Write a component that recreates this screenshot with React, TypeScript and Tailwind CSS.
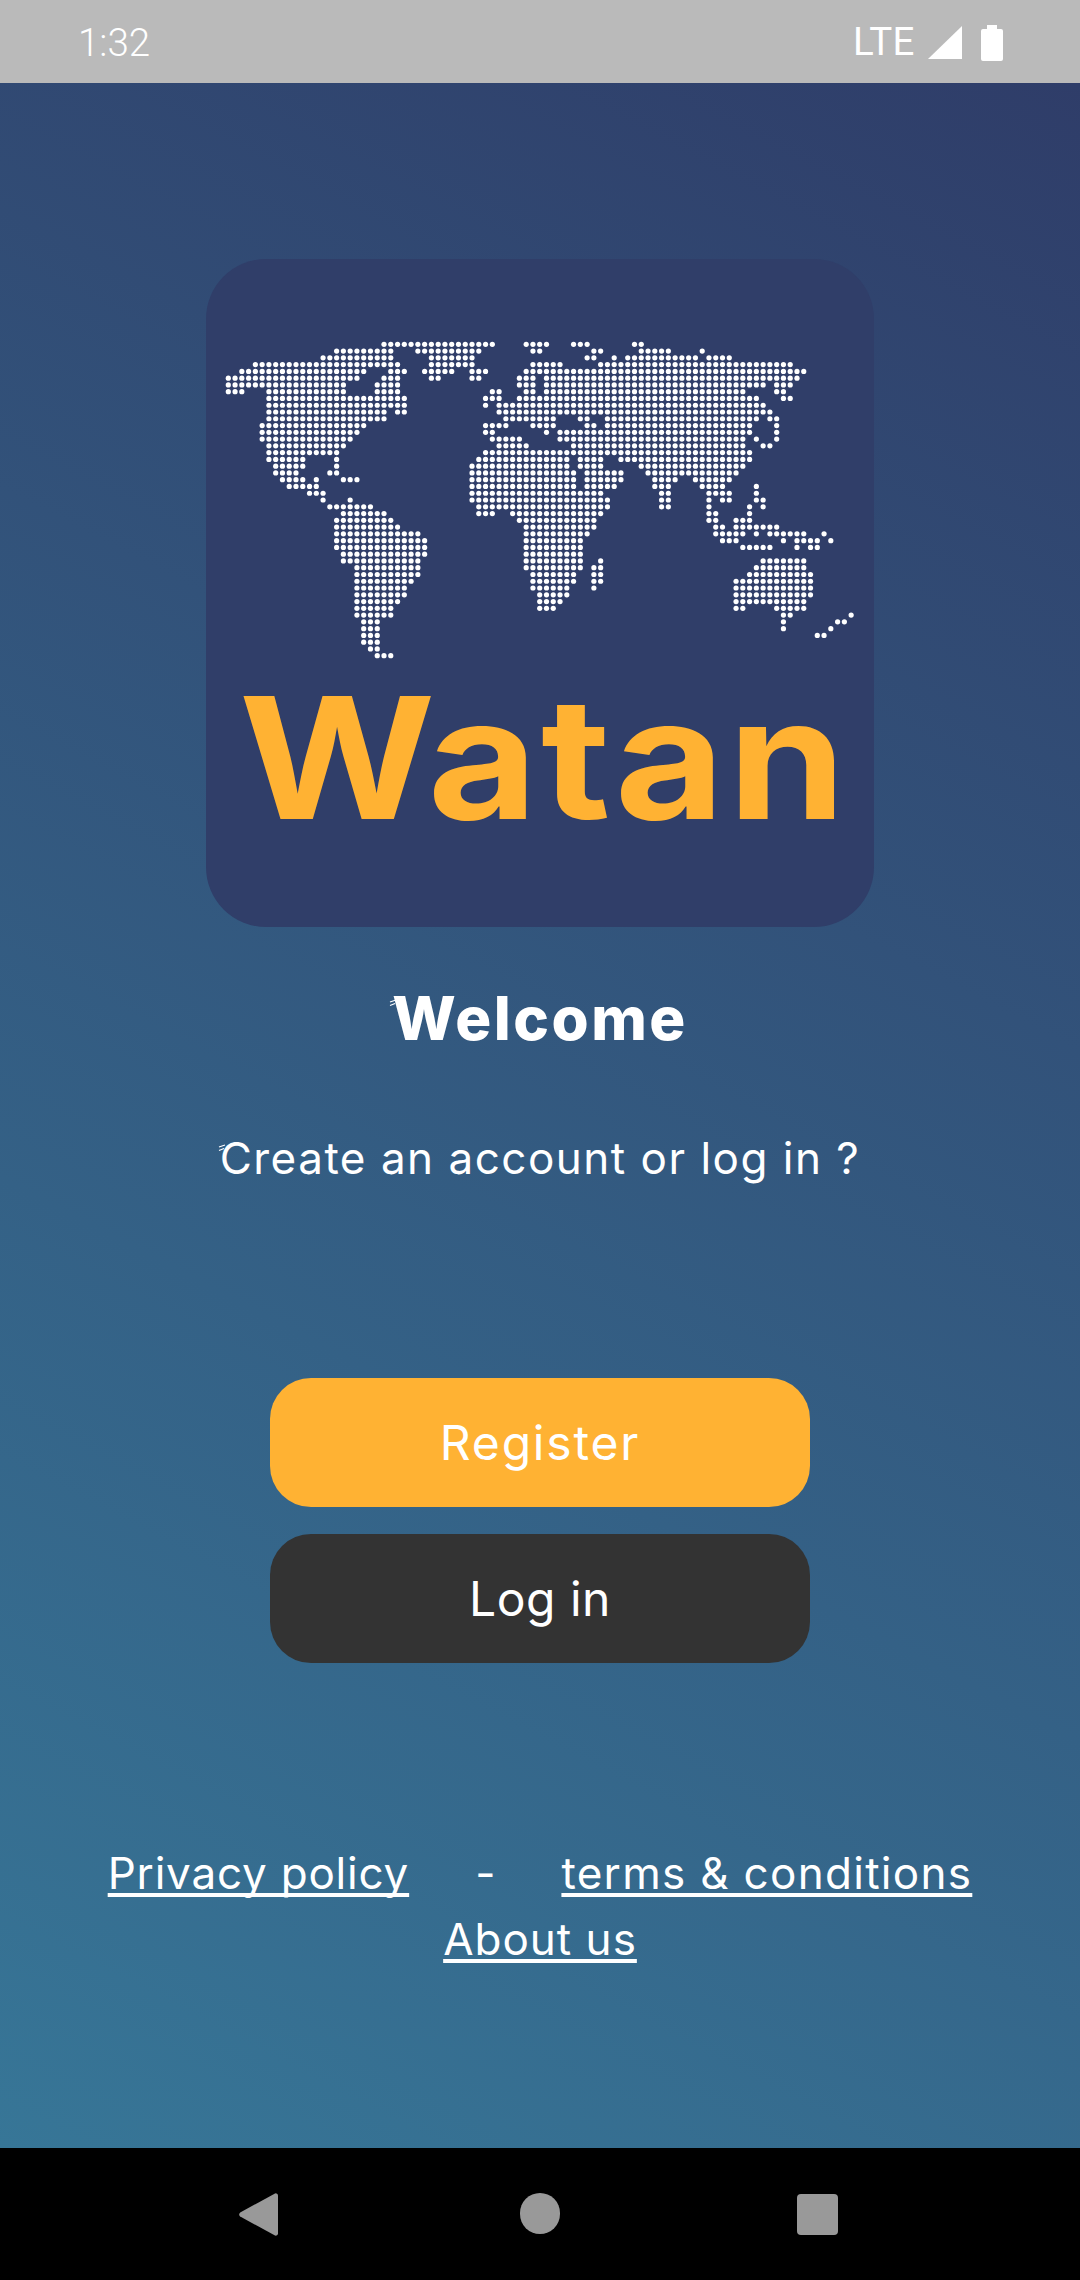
import React from "react"

// one row per line of the dotted map: [first column, last column] runs
const mapRows: number[][][] = [
  [[23, 39], [44, 47], [51, 53], [60, 61]],
  [[16, 24], [28, 37], [45, 46], [54, 55], [61, 65], [70, 70]],
  [[14, 24], [30, 36], [53, 54], [57, 57], [59, 69], [71, 74]],
  [[4, 25], [30, 36], [45, 49], [55, 83]],
  [[2, 20], [24, 26], [29, 33], [36, 38], [44, 85]],
  [[0, 19], [23, 25], [30, 31], [36, 37], [43, 45], [47, 84]],
  [[0, 17], [22, 25], [43, 45], [47, 79], [81, 83]],
  [[0, 2], [6, 17], [22, 25], [39, 40], [44, 45], [47, 76], [81, 82]],
  [[6, 26], [38, 40], [43, 78], [82, 83]],
  [[6, 26], [38, 38], [40, 79]],
  [[6, 23], [25, 26], [40, 80]],
  [[6, 23], [41, 48], [52, 53], [56, 78], [80, 81]],
  [[5, 20], [38, 41], [45, 48], [53, 54], [56, 77], [81, 81]],
  [[5, 19], [38, 39], [47, 47], [49, 77], [81, 81]],
  [[5, 18], [39, 43], [49, 76], [78, 78], [81, 81]],
  [[6, 17], [40, 44], [51, 76], [79, 80]],
  [[6, 16], [38, 77]],
  [[6, 11], [16, 16], [37, 50], [52, 55], [58, 77]],
  [[7, 11], [16, 16], [36, 50], [52, 55], [61, 76]],
  [[7, 10], [15, 16], [36, 51], [53, 58], [62, 75]],
  [[8, 11], [13, 13], [17, 19], [36, 51], [53, 58], [63, 66], [69, 74]],
  [[9, 13], [36, 51], [53, 57], [63, 65], [70, 73], [78, 78]],
  [[12, 14], [36, 55], [64, 65], [71, 74], [78, 78]],
  [[14, 14], [18, 18], [36, 56], [64, 65], [71, 71], [73, 74], [78, 79]],
  [[15, 21], [37, 56], [64, 65], [71, 71], [77, 77], [79, 79]],
  [[17, 23], [37, 39], [42, 55], [71, 72], [77, 77]],
  [[16, 24], [43, 54], [71, 72], [75, 77]],
  [[16, 25], [44, 54], [72, 73], [75, 81]],
  [[16, 28], [44, 53], [72, 76], [78, 78], [80, 85], [88, 88]],
  [[16, 29], [44, 52], [73, 75], [82, 82], [84, 87], [89, 89]],
  [[16, 29], [44, 52], [76, 80], [84, 84], [86, 87]],
  [[17, 29], [44, 52]],
  [[17, 28], [44, 52], [55, 55], [79, 85]],
  [[19, 28], [44, 52], [54, 55], [78, 85]],
  [[19, 28], [45, 51], [54, 55], [77, 86]],
  [[19, 27], [45, 51], [54, 55], [75, 86]],
  [[19, 26], [45, 50], [54, 54], [75, 86]],
  [[19, 26], [46, 50], [75, 86]],
  [[19, 25], [46, 49], [75, 85]],
  [[19, 24], [46, 48], [75, 76], [81, 85]],
  [[19, 24], [82, 83], [92, 92]],
  [[20, 22], [82, 82], [90, 91]],
  [[20, 22], [82, 82], [89, 89]],
  [[20, 22], [87, 88]],
  [[20, 22]],
  [[21, 22]],
  [[22, 24]],
]

const DotMap = () => (
  <svg viewBox="0 0 635 320" className="ml-[19px] mt-[82px] w-[635px] h-[320px] shrink-0">
    {mapRows.map((runs, r) =>
      runs.map(([from, to]) =>
        Array.from({ length: to - from + 1 }, (_, i) => (
          <circle key={`${r}-${from + i}`} cx={3.3 + (from + i) * 6.77} cy={3.3 + r * 6.77} r={2.6} fill="#ffffff" />
        ))
      )
    )}
  </svg>
)

// the small stray ticks in front of the first letter of two headings
const Ticks = ({ className }: { className: string }) => (
  <svg viewBox="0 0 8 8" className={`absolute ${className}`}>
    <path d="M1 3 L7 1 M1 6.5 L6 4.5" stroke="#ffffff" strokeWidth="1.3" fill="none" />
  </svg>
)

const StatusBar = () => (
  <div className="h-[83px] shrink-0 bg-[#bababa] flex items-center justify-between pl-[78px] pr-[77px] pt-[2px] text-white font-[Roboto,sans-serif]">
    <span className="mt-[2px] text-[38.5px] leading-none font-light">1:32</span>
    <div className="flex items-center">
      <span className="text-[38.5px] leading-none tracking-[0.5px] font-normal">LTE</span>
      <svg viewBox="0 0 34 33" className="ml-[13px] w-[34px] h-[33px]">
        <path d="M34 0 V33 H0 Z" fill="#ffffff" />
      </svg>
      <svg viewBox="0 0 22 36" className="ml-[19px] w-[22px] h-[36px]">
        <path d="M6 0 H16 V4 H20 a2 2 0 0 1 2 2 V34 a2 2 0 0 1 -2 2 H2 a2 2 0 0 1 -2 -2 V6 a2 2 0 0 1 2 -2 H6 Z" fill="#ffffff" />
      </svg>
    </div>
  </div>
)

const NavBar = () => (
  <div className="h-[132px] shrink-0 bg-black flex items-start pt-[44px] pl-[239px]">
    <svg viewBox="0 0 39 45" className="w-[39px] h-[45px]">
      <path d="M36 1.5 a2.2 2.2 0 0 1 3 2 V41.500 a2.200 2.200 0 0 1 -3 2 L1.200 24.500 a2.500 2.500 0 0 1 0 -4 Z" fill="#999999" />
    </svg>
    <div className="ml-[242px] mt-[1px] w-[40px] h-[41px] rounded-full bg-[#999999]" />
    <div className="ml-[237px] mt-[2px] w-[41px] h-[41px] rounded-[4px] bg-[#999999]" />
  </div>
)

export default function App() {
  return (
    <div className="w-[1080px] h-[2280px] flex flex-col overflow-hidden font-[Inter,sans-serif] text-white">
      <StatusBar />
      <main className="flex-1 flex flex-col items-center pt-[176px] bg-[linear-gradient(207.6deg,#2f3d69,#377697)]">
        <div className="w-[668px] h-[668px] rounded-[60px] bg-[#303e69] flex flex-col overflow-hidden">
          <DotMap />
          <p className="mt-[-3px] ml-[33px] origin-left scale-x-[1.12] text-[169px] leading-[200px] font-bold tracking-[3px] text-[#ffb233] whitespace-nowrap">Watan</p>
        </div>
        <h1 className="relative mt-[56px] text-[60px] leading-[70px] font-extrabold tracking-[2.5px]">
          <Ticks className="left-[-3px] top-[16px] w-[8px] h-[8px]" />
          Welcome
        </h1>
        <p className="relative mt-[75px] text-[44px] leading-[60px] tracking-[1.5px] whitespace-nowrap">
          <Ticks className="left-[-2px] top-[16px] w-[8px] h-[8px]" />
          Create an account or log in ?
        </p>
        <button className="mt-[190px] w-[540px] h-[129px] rounded-[41px] bg-[#ffb233] text-[48px] tracking-[1.8px]">Register</button>
        <button className="mt-[27px] w-[540px] h-[129px] rounded-[41px] bg-[#333333] text-[48px] tracking-[0.5px]">Log in</button>
        <div className="mt-[177px] flex items-baseline text-[44px] leading-[66px] whitespace-nowrap">
          <span className="underline underline-offset-[4px] tracking-[0.8px] [text-decoration-skip-ink:none]">Privacy policy</span>
          <span className="mx-[66px]">-</span>
          <span className="underline underline-offset-[4px] tracking-[1.3px] [text-decoration-skip-ink:none]">terms &amp; conditions</span>
        </div>
        <span className="text-[44px] leading-[66px] tracking-[1px] underline underline-offset-[4px] [text-decoration-skip-ink:none]">About us</span>
      </main>
      <NavBar />
    </div>
  )
}
